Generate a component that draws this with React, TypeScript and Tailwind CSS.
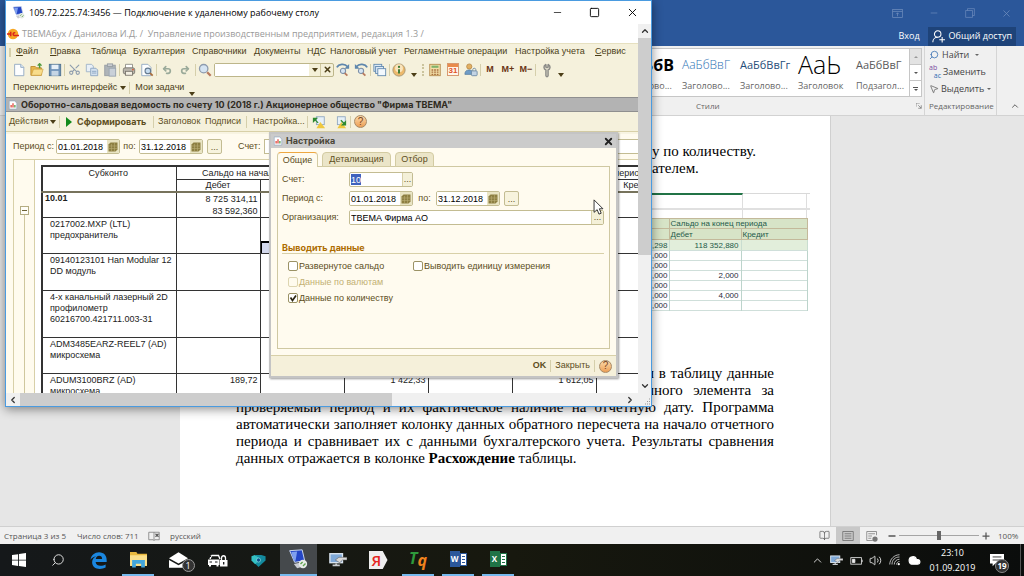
import React from "react";
import {
  Search, Minus, Square, X, ChevronUp, ChevronDown, ChevronLeft, ChevronRight, Scissors, Undo2, Redo2,
  Wrench, MousePointer2, Volume2, Cloud, BookOpen,
} from "lucide-react";

const doc = "font-['Liberation_Serif',serif]";
const seg = "font-['Open_Sans','Noto_Sans',sans-serif]";
const client = "font-['Liberation_Sans',sans-serif]";
const clientBold = "font-['Inter',sans-serif] font-bold";

/* ---------- small drawings ---------- */

function Svg({ size = 14, box = 16, children }: { size?: number; box?: number; children: React.ReactNode }) {
  return (
    <svg width={size} height={size} viewBox={`0 0 ${box} ${box}`} fill="none" aria-hidden="true" className="shrink-0">
      {children}
    </svg>
  );
}

const PageIcon = () => (
  <Svg><path d="M3 1.5h7l3.5 3.5v9.5H3z" fill="#fdfeff" stroke="#8ea6c0" /><path d="M10 1.5V5h3.5" stroke="#8ea6c0" fill="#dbe8f5" /></Svg>
);
const OpenIcon = () => (
  <Svg><path d="M1 4h5l1.5 1.5H13V14H1z" fill="#e9b84e" stroke="#bd8a2a" /><path d="M1.5 14 4 7h11l-2 7z" fill="#f8dc8a" stroke="#c99b3c" strokeWidth=".7" /><path d="M11 6V1M8.8 3 11 .8 13.2 3" stroke="#4f9a3c" strokeWidth="1.6" /></Svg>
);
const SaveIcon = () => (
  <Svg><rect x="1.5" y="1.5" width="13" height="13" fill="#6f93b8" stroke="#4d708f" /><rect x="4" y="2" width="8" height="5" fill="#e8f0f7" /><rect x="4" y="9" width="8" height="5.5" fill="#c5d5e4" /></Svg>
);
const CopyIcon = () => (
  <Svg><path d="M1.5 1.5h6l2 2V10h-8z" fill="#e9f0f7" stroke="#9db1c6" /><path d="M6.500 6h6l2 2v6.500h-8z" fill="#d3e1ef" stroke="#8aa4c0" /><path d="M8 9.500h5M8 11.500h5" stroke="#8aa4c0" /></Svg>
);
const PasteIcon = () => (
  <Svg><rect x="2" y="2.500" width="12" height="12" fill="#aeb4b8" stroke="#969ca2" /><rect x="5" y="1" width="6" height="3" fill="#c9ccd0" stroke="#969ca2" /><rect x="7" y="6" width="7.500" height="9" fill="#c9d0d8" stroke="#9aa5b1" /></Svg>
);
const PrintIcon = () => (
  <Svg><path d="M4 6V1.500h8V6" fill="#fff" stroke="#8c8c84" /><rect x="1.500" y="5.500" width="13" height="7" rx="2" fill="#b9b5ac" stroke="#77736b" /><rect x="4" y="9.500" width="8" height="4.500" fill="#f3efe2" stroke="#77736b" /><circle cx="12.500" cy="7.500" r="1" fill="#d9542c" /></Svg>
);
const PreviewIcon = () => (
  <Svg><path d="M2 1.500h7L12.500 5v9.500H2z" fill="#fdfeff" stroke="#8ea6c0" /><circle cx="9" cy="9" r="3.200" fill="#c6dcf0" stroke="#647a91" strokeWidth="1.300" /><path d="m11.500 11.500 3 3" stroke="#a76c3b" strokeWidth="2" /></Svg>
);
const LensIcon = () => (
  <Svg><circle cx="6.500" cy="6.500" r="4.800" fill="#d5e4f2" stroke="#8d9bae" strokeWidth="1.500" /><path d="m10.500 10.500 4 4" stroke="#b87a5e" strokeWidth="2.600" /></Svg>
);
const FindArrow = ({ back = false }: { back?: boolean }) => (
  <Svg>
    <g transform={back ? "translate(16 0) scale(-1 1)" : undefined}>
      <path d="M1 5c2-4 9-5 12-1" stroke="#5f87ad" strokeWidth="2" /><path d="M15 1v5.500H9.500z" fill="#5f87ad" />
    </g>
    <circle cx="8" cy="9" r="3" fill="#d5e4f2" stroke="#7c8fa6" strokeWidth="1.200" /><path d="m10 11.500 3 3" stroke="#b87a5e" strokeWidth="2" />
  </Svg>
);
const WindowsIcon = () => (
  <Svg><rect x="1" y="1.500" width="9" height="8" fill="#dbe9f6" stroke="#5f87ad" /><rect x="3" y="4" width="9" height="8" fill="#dbe9f6" stroke="#5f87ad" /><rect x="5.500" y="6.500" width="9" height="8" fill="#f2f8fd" stroke="#5f87ad" /></Svg>
);
const InfoIcon = () => (
  <Svg size={14}><circle cx="8" cy="8" r="7" fill="#ecb96c" stroke="#a59470" /><circle cx="8" cy="6" r="4.500" fill="#f9e5bd" /><path d="M8 7v5" stroke="#3c7a34" strokeWidth="2.200" /><circle cx="8" cy="4.500" r="1.300" fill="#3c7a34" /></Svg>
);
const CalcIcon = () => (
  <Svg><rect x="2" y="1.500" width="12" height="13" fill="#f3dfa8" stroke="#b48a4c" /><rect x="4" y="3" width="8" height="2.500" fill="#7fb26a" /><path d="M4 8h8M4 10.500h8M4 13h8" stroke="#a9703f" strokeWidth="1.500" strokeDasharray="2 1" /></Svg>
);
const CalendarIcon = () => (
  <span className="flex h-[13px] w-[12px] flex-col border border-[#d79a72] bg-[#fff6ea]">
    <span className="h-[3px] bg-[#e98b4c]" />
    <span className="text-center text-[8px] leading-[8px] font-bold text-[#e0532b]">31</span>
  </span>
);
const UserLockIcon = () => (
  <Svg><circle cx="6" cy="4" r="3" fill="#e2b062" stroke="#a9783a" strokeWidth=".7" /><path d="M1 13c0-4 2-5 5-5s4 1 4 5z" fill="#6f9cc6" stroke="#4d7396" strokeWidth=".7" /><rect x="8.500" y="9" width="6.500" height="5.500" rx="1" fill="#c3d4e4" stroke="#6b88a4" /><path d="M10 9V7.500c0-2 3.500-2 3.500 0V9" stroke="#6b88a4" /></Svg>
);
const ReportIcon = () => (
  <Svg size={10}><path d="M2 1.500h9L14 5v9.500H2z" fill="#fff" stroke="#8ea6c0" /><path d="M5 12V8" stroke="#e0453a" strokeWidth="2" /><path d="M8 12V5" stroke="#e0453a" strokeWidth="2" /><path d="M11 12V8" stroke="#4b9c46" strokeWidth="2" /></Svg>
);
const SheetArrow = ({ out = false }: { out?: boolean }) => (
  <Svg><rect x="5" y="2" width="9" height="9" fill="#e6f0f8" stroke="#8ea6c0" /><path d="M5 15l4.500-7 5.500 7z" fill="#efc83e" />{out ? <><path d="M15 12H9l6-6z" fill="#2e8a30" /><path d="M9 6l4 4" stroke="#2e8a30" strokeWidth="1.500" /></> : <><path d="M1 3h6L1 9z" fill="#2e8a30" /><path d="M3 5l4 4" stroke="#2e8a30" strokeWidth="1.500" /></>}</Svg>
);
const HelpIcon = () => (
  <span className="flex size-[13px] shrink-0 items-center justify-center rounded-full border border-[#a88a66] bg-linear-to-b from-[#fbd9a8] to-[#eb9f55] text-[10px] leading-none text-[#7a4524]">?</span>
);
const DateGlyph = () => (
  <Svg size={10} box={10}><path d="M2.500.5h7v7l-2 2h-7v-7z" fill="#8d7f42" /><path d="M1 4h8M1 6.500h8M3.500 2v7M6.500 1v8" stroke="#b9ad74" strokeWidth=".6" /></Svg>
);
const Computer = ({ size = 24 }: { size?: number }) => (
  <Svg size={size} box={24}>
    <path d="M2 2 17 1l3 13-12 2z" fill="#2446c6" stroke="#c6d3ea" strokeWidth="1.200" /><path d="m4 3.500 7-.500-2 11-2 .500z" fill="#7fa0ef" />
    <path d="m7 18 10-2 4 4-10 3z" fill="#c9ccd2" /><circle cx="18" cy="18" r="5" fill="#e7ebe7" /><path d="m15 18 2.500-2.500M18 20.500l3-3" stroke="#5da24c" strokeWidth="1.600" />
  </Svg>
);
const RemoteIcon = ({ size = 20 }: { size?: number }) => (
  <Svg size={size} box={20}><rect x="1" y="3" width="14" height="10" fill="#7fa9d8" stroke="#dce6f0" strokeWidth="1.500" /><path d="M4 16h8M8 14v2" stroke="#c8ccd0" strokeWidth="2" /><path d="m7 10 4-3h9v3h-5l-3 3z" fill="#d9d9d9" stroke="#555" strokeWidth=".6" /></Svg>
);
const CarLock = () => (
  <svg width="20" height="13" viewBox="0 0 20 13" fill="none" aria-hidden="true">
    <path d="M3.500 1.500h7l1.500 3.500M3.500 1.500 2 5" stroke="#fff" strokeWidth="1.400" />
    <path d="M0 5.500h11.500v5.500h-1v1.500H8.500V11H3v1.500H1V11H0z" fill="#fff" /><path d="M1.500 8h2.500M7 8h2.500M0 2.500h3" stroke="#17191a" />
    <path d="M13.500 6V4c0-3 4-3 4 0v2" stroke="#fff" strokeWidth="1.300" /><path d="M12 6h7.500v6.500H12z" fill="#fff" /><path d="M15.700 8v2.500" stroke="#17191a" strokeWidth="1.300" />
  </svg>
);
const Arrow = () => <span className="size-0 border-x-[3px] border-t-[4px] border-x-transparent border-t-[#4b3e17]" />;
const Sep = () => <span className="h-3 w-px shrink-0 bg-[#d5cfab]" />;

/* ---------- word processor ---------- */

const styleCards = [
  { preview: "АаБбВ", label: "Заголово...", look: "text-[16px] font-bold text-black justify-end" },
  { preview: "АаБбВвГ", label: "Заголово...", look: "text-[12px] font-light text-[#2e74b5]" },
  { preview: "АаБбВвГг", label: "Заголово...", look: "text-[11px] text-[#1f4d78]" },
  { preview: "АаЬ", label: "Заголовок", look: "text-[25px] font-light text-black" },
  { preview: "АаБбВвГ", label: "Подзагол...", look: "text-[11px] text-[#5a5a5a]" },
];

function WordHeader() {
  return (
    <header className={`${seg} shrink-0`}>
      <div className="bg-[#2b579a] text-white">
        <div className="flex h-[26px] items-center justify-end gap-[26px] pr-3 text-[#7592c0]">
          <Svg size={11}><rect x="1" y="2" width="14" height="12" stroke="currentColor" /><path d="M1 5h14M8 12V7M6 9l2-2 2 2" stroke="currentColor" /></Svg>
          <Minus size={10} strokeWidth={1.500} />
          <Svg size={10}><path d="M1 4h11v11H1zM4 4V1h11v11h-3" stroke="currentColor" /></Svg>
          <X size={11} strokeWidth={1.500} />
        </div>
        <div className="flex h-[20px] items-center justify-end gap-2 pr-2 text-[9px]">
          <button>Вход</button>
          <button className="flex h-[19px] items-center gap-1 bg-[#1e4379] px-[4px]">
            <Svg size={13}><circle cx="7" cy="5" r="4" stroke="white" strokeWidth="1.300" /><path d="M1 15c0-4 3-6 6-6M9 12h7M12.500 8.500v7" stroke="white" strokeWidth="1.300" /></Svg>
            Общий доступ
          </button>
        </div>
      </div>
      <div className="flex h-[70px] justify-end border-b border-[#d2d2d2] bg-[#f0f0f0] text-[9px] text-[#444]">
        <section className="flex w-[303px] flex-col pt-[2px]">
          <div className="flex h-[49px] border border-[#c6c6c6] bg-white">
            <div className="flex min-w-0 flex-1">
              {styleCards.map((c, i) => (
                <button key={i} className="flex w-[58px] shrink-0 flex-col overflow-hidden px-1 text-left text-[#666]">
                  <span className={`flex h-[31px] w-full items-center leading-none whitespace-nowrap ${c.look}`}>{c.preview}</span>
                  <span className="w-full leading-[12px]">{c.label}</span>
                </button>
              ))}
            </div>
            <div className="flex w-[12px] flex-col divide-y divide-[#c6c6c6] border-l border-[#c6c6c6]">
              <button aria-label="Вверх" className="flex flex-1 items-center justify-center bg-[#e3e3e3]"><span className="border-x-2 border-b-2 border-x-transparent border-b-[#999]" /></button>
              <button aria-label="Вниз" className="flex flex-1 items-center justify-center"><span className="border-x-2 border-t-2 border-x-transparent border-t-[#555]" /></button>
              <button aria-label="Все стили" className="flex flex-1 flex-col items-center justify-center gap-px"><span className="h-px w-[5px] bg-[#555]" /><span className="border-x-2 border-t-2 border-x-transparent border-t-[#555]" /></button>
            </div>
          </div>
          <div className="flex flex-1 items-center justify-end text-[8px] text-[#666]">
            <span className="w-[220px]">Стили</span>
            <Svg size={6} box={8}><path d="M0 5V0h5M3 3l4 4M7 3v4H3" stroke="#777" /></Svg>
          </div>
        </section>
        <section className="ml-[2px] flex w-[73px] flex-col border-x border-[#d5d5d5] pl-[4px] text-[9px]">
          <button className="flex h-[17px] items-center gap-[3px]"><Search size={10} className="-scale-x-100 text-[#3f75b5]" />Найти<span className="ml-[3px] border-x-2 border-t-2 border-x-transparent border-t-[#666]" /></button>
          <button className="flex h-[17px] items-center gap-[2px]">
            <span className="flex w-[12px] flex-col text-[7px] leading-[8px]"><span className="text-left text-[#7b4aa0]">ab</span><span className="text-right text-[#2f6cb3]">ac</span></span>Заменить
          </button>
          <button className="flex h-[17px] items-center gap-[2px]"><MousePointer2 size={10} strokeWidth={1.500} />Выделить<span className="ml-px border-x-2 border-t-2 border-x-transparent border-t-[#666]" /></button>
          <div className="flex flex-1 items-center text-[8px] text-[#666]">Редактирование</div>
        </section>
        <div className="flex w-[27px] items-end justify-center pb-1 pl-2"><ChevronUp size={10} /></div>
      </div>
    </header>
  );
}

const excelRows = [
  ["5,000", "", ""], ["2,000", "", ""], ["5,000", "2,000", ""], ["4,000", "", ""], ["5,000", "4,000", ""], ["0,000", "", ""],
];

function ExcelPicture() {
  return (
    <div className="ml-[400px] w-[174px] font-['Liberation_Sans',sans-serif] text-[8px] leading-[9px] text-[#2b2b3c]">
      <div className="flex h-[15px] border-t border-[#d9d9d9]">
        <div className="-mt-px w-[107px] border-t-2 border-r border-t-[#217346] border-r-[#dedede]" />
        <div className="w-[64px] border-r border-[#dedede]" />
      </div>
      <div className="flex h-[10px] border-t-2 border-[#e0e0e0]">
        <div className="w-[107px] border-r border-[#dedede]" /><div className="w-[64px] border-r border-[#dedede]" />
      </div>
      <table className="w-[171px] table-fixed border-collapse">
        <colgroup><col className="w-[33px]" /><col className="w-[72px]" /><col className="w-[66px]" /></colgroup>
        <thead className="bg-[#d7e4c7] text-left text-[#1f5a4a]">
          <tr className="h-[10px] border-y border-[#c3b99a]"><th /><th colSpan={2} className="border-x border-[#c3b99a] px-px font-normal whitespace-nowrap">Сальдо на конец периода</th></tr>
          <tr className="h-[11px] border-b border-[#c3b99a]"><th /><th className="border-x border-[#c3b99a] px-px font-normal">Дебет</th><th className="border-r border-[#c3b99a] px-px font-normal">Кредит</th></tr>
        </thead>
        <tbody className="text-right">
          <tr className="h-[11px] bg-[#e2eedb] text-[#1f5a4a]"><td className="pr-px">5,298</td><td className="border-x border-[#c9ddd0] pr-[2px]">118 352,880</td><td className="border-r border-[#c9ddd0]" /></tr>
          {excelRows.map((r, i) => (
            <tr key={i} className="h-[10px] border-y border-[#cfdfda]"><td className="pr-px">{r[0]}</td><td className="border-x border-[#bcd4cc] pr-[2px]">{r[1]}</td><td className="border-r border-[#bcd4cc]">{r[2]}</td></tr>
          ))}
        </tbody>
      </table>
    </div>
  );
}

function WordDocument() {
  return (
    <main className="grid flex-1 grid-cols-[180px_minmax(0,1fr)_193px] bg-[#e6e6e6]">
      <article className={`${doc} col-start-2 border-r border-[#d0d0d0] bg-white pt-[27px] pr-[56px] pl-[56px] text-[15px] leading-[17px] text-black`}>
        <p className="pl-[416px]">у по количеству.</p>
        <p className="pl-[416px]">ателем.</p>
        <div className="mt-4 mb-[54px] h-[118px]"><ExcelPicture /></div>
        <p className="pl-[410px] [text-align-last:justify]">и в таблицу данные</p>
        <p className="pl-[410px] [text-align-last:justify]">нного элемента за</p>
        <p className="whitespace-nowrap [text-align-last:justify]">проверяемый период и их фактическое наличие на отчетную дату. Программа</p>
        <p className="whitespace-nowrap [text-align-last:justify]">автоматически заполняет колонку данных обратного пересчета на начало отчетного</p>
        <p className="whitespace-nowrap [text-align-last:justify]">периода и сравнивает их с данными бухгалтерского учета. Результаты сравнения</p>
        <p>данных отражается в колонке <b>Расхождение</b> таблицы.</p>
      </article>
    </main>
  );
}

function StatusBar() {
  return (
    <footer className={`${seg} flex h-[18px] shrink-0 items-center border-t border-[#d0d0d0] bg-[#f0f0f0] pl-1 text-[8px] text-[#555]`}>
      <span className="w-[73px]">Страница 3 из 5</span>
      <span className="w-[71px]">Число слов: 711</span>
      <Svg size={12}><path d="M8 3v11M8 3H1v10h6l1 1 1-1h6V3z" stroke="#777" /><path d="m10 5 4 4m0-4-4 4" stroke="#555" strokeWidth="1.500" /></Svg>
      <span className="ml-[10px] flex-1">русский</span>
      <button aria-label="Режим чтения" className="flex w-6 justify-center"><BookOpen size={11} strokeWidth={1.500} /></button>
      <button aria-label="Разметка страницы" className="flex h-full w-6 items-center justify-center bg-[#c8c8c8]"><Svg size={12}><path d="M1 2h14v12H1zM3.500 5h9M3.500 8h9M3.500 11h9" stroke="#666" /></Svg></button>
      <button aria-label="Веб-документ" className="flex w-6 justify-center"><Svg size={12}><path d="M9 14H1V2h13v5M3 5h9M3 8h5M3 11h4" stroke="#777" /><circle cx="12" cy="12" r="3.500" fill="#777" /></Svg></button>
      <button aria-label="Уменьшить" className="ml-1 flex w-[11px]"><Svg size={8}><path d="M1 8h14" stroke="#555" strokeWidth="3" /></Svg></button>
      <input type="range" aria-label="Масштаб" defaultValue={50} className="h-[9px] w-[80px] appearance-none bg-linear-to-b from-transparent from-45% via-[#a5a5a5] via-50% to-transparent to-55% [&::-webkit-slider-thumb]:h-[9px] [&::-webkit-slider-thumb]:w-[4px] [&::-webkit-slider-thumb]:appearance-none [&::-webkit-slider-thumb]:bg-[#666]" />
      <button aria-label="Увеличить" className="ml-[3px] flex w-[16px]"><Svg size={8}><path d="M1 8h14M8 1v14" stroke="#555" strokeWidth="2.500" /></Svg></button>
      <span className="w-[26px] text-[8px]">100%</span>
    </footer>
  );
}

/* ---------- task bar ---------- */

const OfficeIcon = ({ letter, tone, line }: { letter: string; tone: string; line: string }) => (
  <span className="flex items-center">
    <span className={`flex h-[16px] w-[10px] items-center justify-center text-[8px] font-bold text-white ${tone}`}>{letter}</span>
    <span className={`flex h-[13px] w-[7px] flex-col justify-around border bg-white p-px ${line}`}>
      <span className={`h-px ${tone}`} /><span className={`h-px ${tone}`} /><span className={`h-px ${tone}`} />
    </span>
  </span>
);

const taskIcons: { name: string; icon: React.ReactNode; open?: boolean; active?: boolean }[] = [
  { name: "Пуск", icon: <Svg size={14}><path d="M0 2.300 7 1.300V7.600H0zM8 1.150 16 0v7.600H8zM0 8.500h7v6.300l-7-1zM8 8.500h8V16l-8-1.150z" fill="#fff" /></Svg> },
  { name: "Поиск", icon: <Search size={14} strokeWidth={1.700} className="-scale-x-100 text-[#ddd]" /> },
  { name: "Edge", icon: <Svg size={17}><path d="M.5 7.300C1.200 3 4.500.3 8.500.3c4.700 0 7.200 3.400 7.200 7.400v1.700H5.300c.2 2.500 2.300 3.600 4.700 3.600 1.700 0 3.300-.5 4.700-1.300v3c-1.600.9-3.500 1.300-5.500 1.300-4.200 0-7.200-2.300-7.200-6.300C2 7 3.600 4.900 5.900 4 3.500 4.200 1.500 5.600.5 7.300zM5.400 6.600h6c0-1.900-1-3-2.800-3S5.700 4.900 5.400 6.600z" fill="#1b87e0" /></Svg> },
  { name: "Проводник", open: true, icon: <Svg size={17}><path d="M0 1h6l1 1.500h9V14H0z" fill="#e9b93f" /><path d="M0 4h16v10H0z" fill="#fbe08c" /><path d="M2 8.500h12v7h-3.500v-3.500h-5v3.500H2z" fill="#43a6dd" /></Svg> },
  { name: "Почта", icon: (
    <span className="relative flex"><Svg size={19}><path d="M0 6 8 1l8 5-8 4.500z" fill="#fff" /><path d="M0 7.500 8 12l8-4.500V14H0z" fill="#fff" /></Svg>
      <span className="absolute top-[8px] left-[13px] flex size-[13px] items-center justify-center rounded-full border border-[#999] bg-[#333] text-[9px] leading-none text-white">1</span></span>) },
  { name: "Такси", icon: <CarLock /> },
  { name: "Здоровье", icon: <Svg size={15}><path d="M5 2h6l4.500 1.500V8L8 15 3 10z" fill="#148a9e" /><path d="M.5 3.500 4 2l6 4.500L4.500 12 .5 8z" fill="#35c0c4" /><circle cx="8" cy="7.500" r="2.200" fill="#0b4e8b" stroke="#8fe4e8" strokeWidth=".7" /></Svg> },
  { name: "Удаленный рабочий стол", open: true, active: true, icon: <Computer size={20} /> },
  { name: "Удаленный помощник", icon: <RemoteIcon size={18} /> },
  { name: "Яндекс", icon: <span className="flex h-[18px] w-[19px] items-center bg-[#eee] pl-[3px] text-[15px] leading-none font-semibold text-[#e52620] [clip-path:polygon(0_0,75%_0,100%_50%,75%_100%,0_100%)]">Я</span> },
  { name: "Тендер", open: true, icon: <span className="flex text-[16px] leading-none font-bold italic"><span className="text-[#2e9b3c]">T</span><span className="pt-[2px] text-[#f0831e]">q</span></span> },
  { name: "Word", open: true, icon: <OfficeIcon letter="W" tone="bg-[#2b579a]" line="border-[#2b579a]" /> },
  { name: "Excel", open: true, icon: <OfficeIcon letter="X" tone="bg-[#1f7346]" line="border-[#1f7346]" /> },
];

function TaskBar() {
  return (
    <nav className={`${seg} flex h-8 shrink-0 items-stretch bg-linear-to-r from-[#15181a] via-[#17180e] to-[#0b0d0c] text-white`}>
      {taskIcons.map((t) => (
        <button key={t.name} aria-label={t.name} className="flex w-10 items-center justify-center first:w-[38px]">
          <span className={`flex h-full items-center justify-center ${t.active ? "w-[37px] bg-[#45494c]" : "w-8"} ${t.open ? "border-b-2 border-[#76b9ed]" : ""}`}>{t.icon}</span>
        </button>
      ))}
      <div className="ml-auto flex items-center">
        <span className="flex w-5 justify-center"><ChevronUp size={13} strokeWidth={1.500} /></span>
        <span className="flex w-[19px] justify-center"><RemoteIcon size={13} /></span>
        <span className="flex w-[20px] justify-center"><Svg size={13}><rect x="1" y="4.500" width="13" height="8" stroke="#eee" /><path d="M3 6.500h3v4H3zM15 7v3" fill="#eee" stroke="#eee" /></Svg></span>
        <span className="flex w-[19px] justify-center"><Volume2 size={13} strokeWidth={1.500} /></span>
        <span className="flex w-[19px] justify-center"><Svg size={12}><path d="M1 14C1 7 7 1 14 1M4 14c0-6 4-10 10-10M7 14c0-4 3-7 7-7M10 14c0-2 2-4 4-4" stroke="#bbb" strokeWidth="1.300" /><circle cx="13" cy="13.500" r="1.500" fill="#fff" /></Svg></span>
        <span className="flex w-[20px] justify-center"><Cloud size={13} fill="white" /></span>
        <span className="flex w-[57px] flex-col items-center text-[9px] leading-[15px]"><span>23:10</span><span>01.09.2019</span></span>
        <span className="relative mr-4 ml-[9px] flex"><Svg size={14}><path d="M0 1h16v11H6l-3 3v-3H0z" fill="#fff" /><path d="M3 4.500h10M3 8h10" stroke="#222" /></Svg>
          <span className="absolute top-[6px] left-[5px] flex size-[14px] items-center justify-center rounded-full border border-[#888] bg-[#333] text-[8px] leading-none font-bold">19</span></span>
        <span className="h-full w-px bg-[#555]" /><span className="w-[3px]" />
      </div>
    </nav>
  );
}

/* ---------- accounting client in the remote window ---------- */

const menu = [
  ["Файл", "w-[34px]", true], ["Правка", "w-[41px]", true], ["Таблица", "w-[42px]", false], ["Бухгалтерия", "w-[59px]", false],
  ["Справочники", "w-[62px]", false], ["Документы", "w-[53px]", false], ["НДС", "w-[23px]", false], ["Налоговый учет", "w-[74px]", false],
  ["Регламентные операции", "w-[111px]", false], ["Настройка учета", "w-[80px]", false], ["Сервис", "w-[40px]", true],
] as const;

const tool = "flex w-[18px] shrink-0 items-center justify-center";

function Toolbar() {
  return (
    <div className="flex h-[19px] items-center pl-[4px] text-[9px] font-bold text-[#6a3414]">
      <button aria-label="Создать" className={tool}><PageIcon /></button>
      <button aria-label="Открыть" className={tool}><OpenIcon /></button>
      <button aria-label="Сохранить" className={tool}><SaveIcon /></button>
      <Sep />
      <button aria-label="Вырезать" className={`${tool} text-[#8d9cad]`}><Scissors size={13} className="-rotate-90" /></button>
      <button aria-label="Копировать" className={tool}><CopyIcon /></button>
      <button aria-label="Вставить" className={tool}><PasteIcon /></button>
      <Sep />
      <button aria-label="Печать" className={tool}><PrintIcon /></button>
      <button aria-label="Просмотр" className={tool}><PreviewIcon /></button>
      <Sep />
      <span className="flex px-px">
        <button aria-label="Отменить" className={`${tool} text-[#9aaa9a]`}><Undo2 size={10} strokeWidth={4} /></button>
        <button aria-label="Вернуть" className={`${tool} text-[#9aaa9a]`}><Redo2 size={10} strokeWidth={4} /></button>
      </span>
      <Sep />
      <button aria-label="Найти" className={tool}><LensIcon /></button>
      <div className="flex h-[14px] w-[120px] items-center rounded-xs border border-[#bdb68a] bg-[#f4f0d8]">
        <input aria-label="Строка поиска" className="h-full w-[94px] bg-white outline-none" />
        <button aria-label="История" className="flex h-full w-3 items-center justify-center border-r border-[#cfc8a0]"><Arrow /></button>
        <button aria-label="Очистить" className="flex flex-1 justify-center"><X size={9} strokeWidth={4} className="text-[#4b3e17]" /></button>
      </div>
      <button aria-label="Далее" className={tool}><FindArrow /></button>
      <button aria-label="Назад" className={tool}><FindArrow back /></button>
      <Sep />
      <button aria-label="Окна" className={tool}><WindowsIcon /></button>
      <Sep />
      <button aria-label="Справка" className={tool}><InfoIcon /></button>
      <span className="flex h-full w-[12px] items-end justify-center pb-[2px]"><Arrow /></span>
      <span className="mx-[2px] h-3 border-l-2 border-dotted border-[#cbc49d]" />
      <button aria-label="Калькулятор" className={tool}><CalcIcon /></button>
      <button aria-label="Календарь" className={tool}><CalendarIcon /></button>
      <button aria-label="Пользователь" className={tool}><UserLockIcon /></button>
      <Sep />
      <button className={tool}>M</button>
      <button className={tool}>M+</button>
      <button className={tool}>M−</button>
      <Sep />
      <button aria-label="Настройки" className={`${tool} ml-[2px] text-[#8c8c88]`}><Wrench size={12} strokeWidth={3} className="-rotate-45" /></button>
      <span className="flex h-full w-[9px] items-end justify-center pb-[2px]"><Arrow /></span>
    </div>
  );
}

const field = "h-full min-w-0 bg-white px-px text-[9px] text-black outline-none";

function DateField({ id, value, label }: { id: string; value: string; label: string }) {
  return (
    <span className="flex h-[15px] w-[64px] shrink-0 overflow-hidden rounded-xs border border-[#c3bc92]">
      <input id={id} aria-label={label} defaultValue={value} className={`${field} w-[50px]`} />
      <button aria-label="Выбрать дату" className="flex flex-1 items-center justify-center bg-[#e9e4c3]"><DateGlyph /></button>
    </span>
  );
}

const Dots = ({ label }: { label: string }) => (
  <button aria-label={label} className="flex h-[15px] w-[15px] shrink-0 items-end justify-center rounded-xs border border-[#c3bc92] bg-[#f7f3dd] text-[9px] leading-[11px] text-[#5d4e22]">...</button>
);

const items = [
  { lines: ["0217002.MXP (LTL)", "предохранитель"], h: "h-[36px]", selected: true, v: ["", "", ""] },
  { lines: ["09140123101 Han Modular 12", "DD модуль"], h: "h-[37px]", v: ["", "", ""] },
  { lines: ["4-х канальный лазерный 2D", "профилометр", "60216700.421711.003-31"], h: "h-[47px]", v: ["", "", ""] },
  { lines: ["ADM3485EARZ-REEL7 (AD)", "микросхема"], h: "h-[36px]", v: ["", "", ""] },
  { lines: ["ADUM3100BRZ (AD)", "микросхема"], h: "h-[37px]", v: ["189,72", "1 422,33", "1 612,05"] },
];
const cell = "border border-[#333] p-0 pr-[2px] pt-px align-top";
const side = "border-r border-[#333]";

function Ledger() {
  return (
    <div className="flex min-h-0 flex-1 overflow-hidden bg-[#fffbee] pl-[7px]">
      <div className="flex w-[22px] shrink-0 flex-col items-center border-x border-t border-[#d8d0a8] pt-[46px]">
        <button aria-label="Свернуть" className="flex size-[9px] items-center justify-center border border-[#b5ad82] bg-[#fffef8]"><span className="h-px w-[5px] bg-[#6d6337]" /></button>
        <span className="w-px flex-1 bg-[#cfc79d]" />
      </div>
      <div className="min-w-0 flex-1 overflow-hidden border-t border-[#d8d0a8] bg-white pt-[5px] pl-[6px]">
        <table className="w-[638px] table-fixed border-collapse border-t-2 border-l-2 border-[#333] text-right text-[9px] leading-[11px] text-[#1c1c1c]">
          <colgroup><col className="w-[134px]" /><col className="w-[84px]" /><col className="w-[84px]" /><col className="w-[84px]" /><col className="w-[84px]" /><col className="w-[84px]" /><col className="w-[84px]" /></colgroup>
          <thead className="text-center">
            <tr className="h-[13px]">
              <th rowSpan={2} className={`${cell} font-normal`}>Субконто</th>
              {["Сальдо на начало периода", "Обороты за период", "Сальдо на конец периода"].map((h) => <th key={h} colSpan={2} className={`${cell} font-normal`}>{h}</th>)}
            </tr>
            <tr className="h-[12px]">
              {["Дебет", "Кредит", "Дебет", "Кредит", "Дебет", "Кредит"].map((h, i) => <th key={i} className="border border-[#333] p-0 font-normal">{h}</th>)}
            </tr>
          </thead>
          <tbody>
            <tr className="h-[25px] border-t-2 border-[#77735c]">
              <td className={`${side} pl-[2px] text-left align-top font-bold`}>10.01</td>
              <td className={`${side} pr-[2px] align-top leading-[12px]`}>8 725 314,11<br />83 592,360</td>
              <td className={side} /><td className={side} /><td className={side} /><td className={side} /><td />
            </tr>
            {items.map((r) => (
              <tr key={r.lines[0]} className={r.h}>
                <td className={`${cell} pl-[7px] text-left whitespace-nowrap`}>{r.lines.map((l) => <div key={l}>{l}</div>)}</td>
                <td className={cell}>{r.v[0]}</td>
                <td className="border border-[#333] p-0 align-bottom">{r.selected && <div className="h-[12px] border-t-2 border-l border-black bg-[#d3d8ec]" />}</td>
                <td className={cell}>{r.v[1]}</td><td className={cell} />
                <td className={cell}>{r.v[2]}</td><td className={cell} />
              </tr>
            ))}
          </tbody>
        </table>
      </div>
    </div>
  );
}

function Check({ id, label, checked = false, disabled = false }: { id: string; label: string; checked?: boolean; disabled?: boolean }) {
  return (
    <span className="flex items-center gap-px">
      <span className="grid size-[10px]">
        <input id={id} type="checkbox" defaultChecked={checked} disabled={disabled} className="col-start-1 row-start-1 size-[10px] appearance-none rounded-xs border border-[#9b9265] bg-white disabled:border-[#ddd5b0] disabled:bg-[#fffbee]" />
        {checked && <svg viewBox="0 0 10 10" className="pointer-events-none col-start-1 row-start-1 size-[10px]"><path d="m2.500 4.500 2 3 3.500-5" fill="none" stroke="#2c2613" strokeWidth="1.700" /></svg>}
      </span>
      <label htmlFor={id} className={disabled ? "text-[#c3b174]" : ""}>{label}</label>
    </span>
  );
}

function SettingsDialog() {
  return (
    <div role="dialog" aria-label="Настройка" className={`${client} absolute top-[131px] left-[263px] flex h-[246px] w-[349px] flex-col border-2 border-[#c4c4c4] bg-[#fffbef] text-[9px] text-[#5d4e22] shadow-[1px_1px_2px_#0006]`}>
      <div className={`${clientBold} flex h-[14px] items-center gap-[3px] bg-[#cbcbcb] px-[2px] text-[9px] text-[#4a4637]`}>
        <ReportIcon />Настройка
        <button aria-label="Закрыть окно" className="ml-auto"><X size={11} strokeWidth={4} className="text-[#222]" /></button>
      </div>
      <div className="flex min-h-0 flex-1 flex-col px-[6px] pt-[4px] pb-[6px]">
        <div role="tablist" className="z-10 -mb-px flex h-[15px] items-end gap-[4px] leading-[13px]">
          <button role="tab" className="h-[15px] w-[41px] rounded-t-sm border border-b-0 border-[#d3cba2] border-t-[#eda741] bg-[#fffbef]">Общие</button>
          <button role="tab" className="h-[15px] w-[69px] rounded-t-sm border border-[#d3cba2] bg-[#ebe5c8]">Детализация</button>
          <button role="tab" className="h-[15px] w-[39px] rounded-t-sm border border-[#d3cba2] bg-[#ebe5c8]">Отбор</button>
        </div>
        <div className="flex min-h-0 flex-1 flex-col border border-[#cfc8a2] pt-[3px] pr-[5px] pl-[4px]">
          <div className="flex h-[19px] items-center">
            <label htmlFor="acc" className="w-[67px]">Счет:</label>
            <span className="flex h-[15px] w-[64px] overflow-hidden rounded-xs border border-[#c3bc92] bg-white">
              <span className="grid w-[52px] items-center"><span className="col-start-1 row-start-1 ml-px h-[11px] w-[10px] bg-[#3f62bd]" /><input id="acc" defaultValue="10" className="col-start-1 row-start-1 h-full w-[50px] bg-transparent px-px text-[9px] text-white outline-none" /></span>
              <button aria-label="Выбрать счет" className="flex-1 border-l border-[#d8d0a8] bg-[#f4f0d8] leading-[13px]">...</button>
            </span>
          </div>
          <div className="flex h-[19px] items-center">
            <label htmlFor="d1" className="w-[67px]">Период с:</label>
            <DateField id="d1" label="Начало периода" value="01.01.2018" />
            <label htmlFor="d2" className="w-[23px] text-center">по:</label>
            <DateField id="d2" label="Конец периода" value="31.12.2018" />
            <span className="w-[4px]" /><Dots label="Выбрать период" />
          </div>
          <div className="flex h-[19px] items-center">
            <label htmlFor="org" className="w-[67px]">Организация:</label>
            <span className="flex h-[15px] flex-1 overflow-hidden rounded-xs border border-[#c3bc92]">
              <input id="org" defaultValue="ТВЕМА Фирма АО" className={`${field} flex-1`} />
              <button aria-label="Выбрать организацию" className="w-[12px] border-l border-[#d8d0a8] bg-[#f4f0d8] leading-[13px]">...</button>
            </span>
          </div>
          <h3 className={`${clientBold} mt-[14px] h-[13px] border-b border-[#d8d0a8] leading-[13px] text-[#ad6c00]`}>Выводить данные</h3>
          <div className="grid grid-cols-[125px_1fr] gap-y-[6px] pt-[7px] pl-[6px] leading-[10px]">
            <Check id="c1" label="Развернутое сальдо" /><Check id="c2" label="Выводить единицу измерения" />
            <div className="col-span-2"><Check id="c3" label="Данные по валютам" disabled /></div>
            <div className="col-span-2"><Check id="c4" label="Данные по количеству" checked /></div>
          </div>
        </div>
      </div>
      <div className="flex h-[21px] items-center justify-end gap-[4px] border-t border-[#d8d0a8] bg-[#f5f0da] pr-[4px]">
        <button className="font-bold">OK</button><Sep /><button>Закрыть</button><Sep />
        <button aria-label="Справка"><HelpIcon /></button>
      </div>
      <svg viewBox="0 0 12 18" className="absolute top-[65px] left-[322px] h-[16px] w-[11px]"><path d="M1 1v14l3.500-3 2 5 2.500-1-2-5h4z" fill="#fff" stroke="#222" /></svg>
    </div>
  );
}

function RemoteWindow() {
  return (
    <section className="absolute top-0 left-[5px] flex h-[407px] w-[647px] flex-col border border-[#4a9be0] bg-white shadow-[0_2px_10px_#0007]">
      <div className={`${seg} flex h-[23px] shrink-0 items-center pl-[6px] text-[9px] text-black`}>
        <Computer size={13} /><span className="ml-[4px]">109.72.225.74:3456 — Подключение к удаленному рабочему столу</span>
        <div className="ml-auto flex gap-[26px] pr-[12px]">
          <button aria-label="Свернуть"><Minus size={11} strokeWidth={1.500} /></button>
          <button aria-label="Развернуть"><Square size={11} strokeWidth={2} /></button>
          <button aria-label="Закрыть"><X size={13} strokeWidth={1.700} /></button>
        </div>
      </div>
      <div className="flex min-h-0 flex-1">
        <div className={`${client} flex min-w-0 flex-1 flex-col overflow-hidden bg-[#f5f1dc] text-[9px] text-[#4b3e17]`}>
          <div className={`${seg} flex h-[19px] shrink-0 items-center gap-[3px] bg-white pl-px text-[9px] whitespace-pre text-[#999]`}>
            <Svg size={12}><circle cx="8" cy="8" r="7" fill="#f6a623" /><path d="M0 8h4M5 5v6M11 6.500c-3-1-4 3-1 3.500h6" stroke="#d9241c" strokeWidth="2" /></Svg>
            ТВЕМАбух / Данилова И.Д. /  Управление производственным предприятием, редакция 1.3 /
          </div>
          <div className="flex h-[17px] shrink-0 items-center border-t border-[#e6e0c0] pl-[3px]">
            <span className="mr-[5px] h-[9px] w-[2px] bg-[#d5cfab]" />
            {menu.map(([name, w, underline]) => (
              <button key={name} className={`${w} shrink-0 text-left whitespace-nowrap ${underline ? "first-letter:underline" : ""}`}>{name}</button>
            ))}
          </div>
          <Toolbar />
          <div className="flex h-[18px] shrink-0 items-center gap-[3px] pl-[7px]">
            <button className="flex items-center gap-[3px]">Переключить интерфейс<Arrow /></button><Sep />
            <button className="ml-[2px]">Мои задачи</button><span className="flex h-full items-end pb-px pl-[2px]"><Arrow /></span>
          </div>
          <div className={`${clientBold} flex h-[15px] shrink-0 items-center gap-[3px] border-y border-[#8f8f8f] bg-[#b3b3b3] pl-[2px] whitespace-nowrap text-[#2f2b1f]`}>
            <ReportIcon />Оборотно-сальдовая ведомость по счету 10 (2018 г.) Акционерное общество "Фирма ТВЕМА"
          </div>
          <div className="flex h-[20px] shrink-0 items-center border-b border-[#d8d0a8] pl-[3px] whitespace-nowrap text-[#5d4e22]">
            <button className="flex w-[50px] items-center gap-[2px]">Действия<Arrow /></button><Sep />
            <button className={`${clientBold} flex w-[93px] items-center gap-[5px] pl-[6px]`}><span className="border-y-[5px] border-l-[6px] border-y-transparent border-l-[#118a1c]" />Сформировать</button><Sep />
            <button className="w-[50px] pl-[4px] text-left">Заголовок</button>
            <button className="w-[42px] pl-px text-left">Подписи</button><Sep />
            <button className="w-[60px] pl-[6px] text-left">Настройка...</button><Sep />
            <span className="flex w-[42px] justify-around"><SheetArrow /><SheetArrow out /></span><Sep />
            <span className="pl-[3px]"><HelpIcon /></span>
          </div>
          <div className="flex h-[27px] shrink-0 items-center border-t-2 border-[#f8f4e2] bg-[#fffbef] pl-[7px] text-[#5d4e22]">
            <label htmlFor="p1" className="w-[43px] whitespace-nowrap">Период с:</label>
            <DateField id="p1" label="Начало" value="01.01.2018" />
            <label htmlFor="p2" className="w-[19px] text-center">по:</label>
            <DateField id="p2" label="Конец" value="31.12.2018" />
            <span className="w-[4px]" /><Dots label="Период" />
            <label htmlFor="p3" className="mr-[4px] ml-[16px]">Счет:</label>
            <input id="p3" className="h-[15px] min-w-0 flex-1 border border-r-0 border-[#c3bc92] bg-white" />
          </div>
          <Ledger />
        </div>
        <div className="flex w-[13px] shrink-0 flex-col bg-[#f0f0f0] text-[#333]">
          <button aria-label="Вверх" className="flex h-[14px] items-center justify-center"><ChevronUp size={10} strokeWidth={3} /></button>
          <div className="h-[217px] bg-[#cdcdcd]" />
          <button aria-label="Вниз" className="mt-auto flex h-[14px] items-center justify-center"><ChevronDown size={10} strokeWidth={3} /></button>
        </div>
      </div>
      <div className="flex h-[13px] shrink-0 items-center bg-[#f0f0f0] text-[#333]">
        <button aria-label="Влево" className="flex w-[14px] justify-center"><ChevronLeft size={10} strokeWidth={3} /></button>
        <div className="h-full w-[372px] bg-[#cdcdcd]" />
        <button aria-label="Вправо" className="ml-auto flex w-[14px] justify-center"><ChevronRight size={10} strokeWidth={3} /></button>
        <span className="flex w-[14px] justify-end self-end"><Svg size={8} box={8}><path d="M6 1h1M4 3.500h1M6 3.500h1M2 6h1M4 6h1M6 6h1" stroke="#999" /></Svg></span>
      </div>
      <SettingsDialog />
    </section>
  );
}

export default function App() {
  return (
    <div className="relative flex min-h-screen flex-col overflow-hidden">
      <WordHeader />
      <WordDocument />
      <StatusBar />
      <TaskBar />
      <RemoteWindow />
    </div>
  );
}
